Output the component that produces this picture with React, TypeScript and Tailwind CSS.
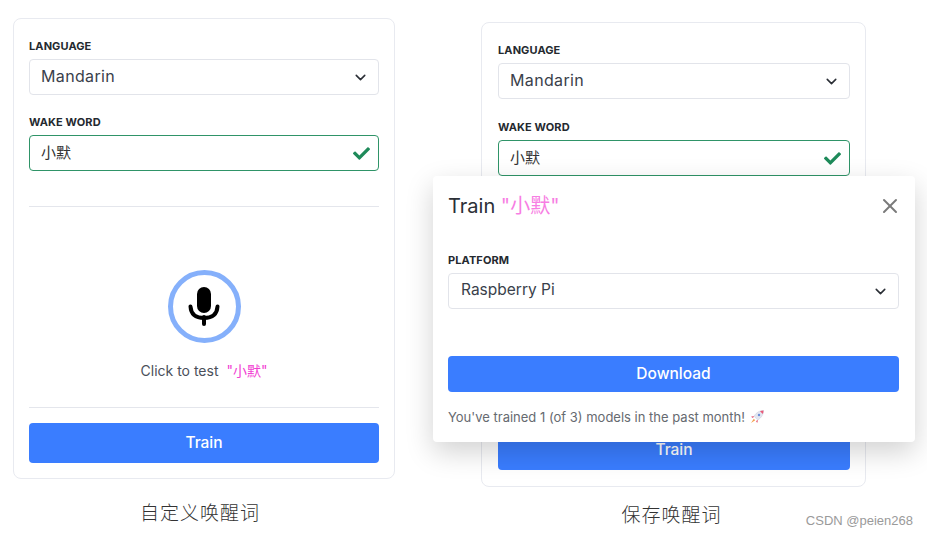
import { ChevronDown, X } from "lucide-react";
import { FaCheck } from "react-icons/fa";

const font = { fontFamily: '"Inter", "Noto Sans CJK SC", sans-serif' };

const Label = ({ children }: { children: string }) => (
  <p className="mb-1 h-[18px] text-[11px] leading-[18px] font-bold tracking-[0.1px] text-[#24292f]">{children}</p>
);

const Select = ({ value, className }: { value: string; className: string }) => (
  <div className={`flex h-9 items-center justify-between rounded border border-[#e2e4ea] bg-white pr-[9px] text-[#3a3f4b] ${className}`}>
    <span className="-mt-0.5">{value}</span>
    <ChevronDown size={17} strokeWidth={2.2} className="text-[#2b2f36]" />
  </div>
);

const WakeWord = () => (
  <div className="flex h-9 items-center justify-between rounded border border-[#2f9468] bg-white pr-2 pl-[11px] text-[15px] text-[#333]">
    <span>小默</span>
    <FaCheck size={17} className="text-[#1e8a5a]" />
  </div>
);

const Mic = () => (
  <svg width="34" height="40" viewBox="0 0 34 40" className="text-black">
    <rect x="10" y="0" width="14" height="26" rx="7" fill="currentColor" />
    <path d="M3.5 19.5 C4 28 10 31 17 31 C24 31 30 28 30.5 19.5" fill="none" stroke="currentColor" strokeWidth="4" strokeLinecap="round" />
    <path d="M17 30 V37" stroke="currentColor" strokeWidth="4" strokeLinecap="round" />
  </svg>
);

const Rocket = () => (
  <svg width="14" height="14" viewBox="0 0 14 14" className="ml-[5px] inline-block">
    <path d="M13.5 .5 C10 .5 6.5 2.2 4 6.2 L7.8 10 C11.8 7.5 13.5 4 13.5 .5 Z" fill="#e3e6f0" stroke="#c6c9d8" strokeWidth=".5" />
    <path d="M13.5 .5 C12.3 .5 11 .7 10 1.2 L12.8 4 C13.3 3 13.5 1.7 13.5 .5 Z" fill="#ea5a78" />
    <path d="M4 6 L1 6.8 L3 8 Z M8 10 L7.2 13 L6 11 Z" fill="#e2506e" />
    <path d="M3.8 8.8 L5.2 10.2 L1 13 Z" fill="#f3a04b" />
    <circle cx="9" cy="5" r="1.2" fill="#6b8fd8" />
  </svg>
);

const Caption = ({ children, className }: { children: string; className: string }) => (
  <p className={`text-center text-[19px] leading-6 font-light tracking-[1px] text-[#333] ${className}`} style={{ fontFamily: '"Noto Sans CJK SC", sans-serif' }}>
    {children}
  </p>
);

export default function App() {
  return (
    <div className="relative h-[538px] w-[927px] overflow-hidden bg-white" style={font}>
      <div className="flex items-start pl-[13px]">
        <div className="mt-[18px] w-[382px]">
          <div className="h-[461px] rounded-lg border border-[#e8eaf0] bg-white px-[15px] pt-[18px]">
            <Label>LANGUAGE</Label>
            <Select value="Mandarin" className="pl-[11px] text-[16px] tracking-[0.35px]" />
            <div className="mt-[18px]">
              <Label>WAKE WORD</Label>
              <WakeWord />
            </div>
            <div className="mt-[35px] border-t border-[#e4e6ec]" />
            <div className="flex h-[200px] flex-col items-center">
              <div className="mt-[63px] flex h-[73px] w-[73px] items-center justify-center rounded-full border-[5px] border-[#85b0fb]">
                <Mic />
              </div>
              <p className="mt-[18px] text-[14px] leading-5 text-[#4a4f5a]">
                Click to test <span className="ml-1 text-[#f23fd3]">"小默"</span>
              </p>
            </div>
            <div className="border-t border-[#e4e6ec]" />
            <button className="mt-[15px] h-10 w-full rounded bg-[#3a7dff] text-[15.5px] font-medium text-white">Train</button>
          </div>
          <div className="mt-[21px]">
            <Caption className="pr-2">自定义唤醒词</Caption>
          </div>
        </div>

        <div className="mt-[22px] ml-[86px] w-[385px]">
          <div className="h-[465px] rounded-lg border border-[#e8eaf0] bg-white pt-[18px] pr-[15px] pl-4">
            <Label>LANGUAGE</Label>
            <Select value="Mandarin" className="pl-[11px] text-[16px] tracking-[0.35px]" />
            <div className="mt-[19px]">
              <Label>WAKE WORD</Label>
              <WakeWord />
            </div>
            <button className="mt-[254px] h-10 w-full rounded bg-[#3a7dff] text-[15.5px] font-medium text-white">Train</button>
          </div>
          <div className="mt-[15px]">
            <Caption className="pr-1">保存唤醒词</Caption>
          </div>
        </div>
      </div>

      {/* modal over the right card */}
      <div className="absolute top-[176px] left-[433px] h-[266px] w-[482px] rounded bg-white pt-[17px] pr-4 pl-[15px] shadow-[0_10px_28px_rgba(0,0,0,0.18)]">
        <div className="flex h-[26px] items-center justify-between">
          <p className="text-[20px] text-[#2b2f36]">
            Train <span className="text-[#f77ee3]">"小默"</span>
          </p>
          <X size={24} strokeWidth={2} className="mr-[-3px] text-[#7a7a7a]" />
        </div>
        <div className="mt-[32px]">
          <Label>PLATFORM</Label>
          <Select value="Raspberry Pi" className="pl-3 text-[15.5px]" />
        </div>
        <button className="mt-[47px] h-9 w-full rounded bg-[#3a7dff] text-[15.5px] font-medium text-white">Download</button>
        <p className="mt-4 flex items-center text-[13px] leading-[18px] text-[#666a70]">
          You've trained 1 (of 3) models in the past month!
          <Rocket />
        </p>
      </div>

      <p className="absolute top-[513px] right-[14px] text-[13px] leading-4 text-[#9a9a9a]" style={{ fontFamily: '"Liberation Sans", sans-serif' }}>
        CSDN @peien268
      </p>
    </div>
  );
}
